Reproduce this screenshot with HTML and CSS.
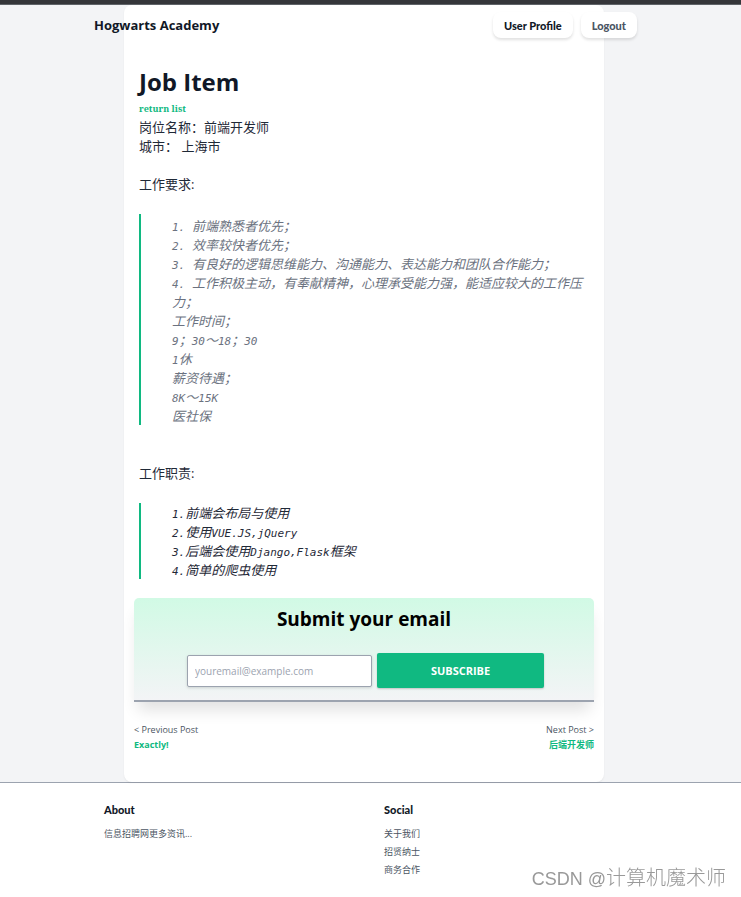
FILE: index.html
```
<!DOCTYPE html>
<html lang="zh-CN">
<head>
    <meta charset="UTF-8">
    <title>Hogwarts Academy</title>
    <link rel="stylesheet" href="styles.css">
</head>
<body>
    <div class="topbar"></div>
    <div class="page">
        <header class="nav">
            <a class="brand" href="#">Hogwarts Academy</a>
            <nav class="nav-links">
                <a class="pill" href="#">User Profile</a>
                <a class="pill muted" href="#">Logout</a>
            </nav>
        </header>
        <main class="card">
            <article class="job">
                <h1>Job Item</h1>
                <a class="return" href="#">return list</a>
                <div class="line">岗位名称：前端开发师</div>
                <div class="line">城市： 上海市</div>
                <h2>工作要求:</h2>
                <blockquote class="gray">
                    <p><code>1. </code>前端熟悉者优先；</p>
                    <p><code>2. </code>效率较快者优先；</p>
                    <p><code>3. </code>有良好的逻辑思维能力、沟通能力、表达能力和团队合作能力；</p>
                    <p><code>4. </code>工作积极主动，有奉献精神，心理承受能力强，能适应较大的工作压力；</p>
                    <p>工作时间；</p>
                    <p><code>9</code>；<code>30</code>～<code>18</code>；<code>30</code></p>
                    <p><code>1</code>休</p>
                    <p>薪资待遇；</p>
                    <p><code>8K</code>～<code>15K</code></p>
                    <p>医社保</p>
                </blockquote>
                <h2 class="duty">工作职责:</h2>
                <blockquote>
                    <p><code>1.</code>前端会布局与使用</p>
                    <p><code>2.</code>使用<code>VUE.JS,jQuery</code></p>
                    <p><code>3.</code>后端会使用<code>Django,Flask</code>框架</p>
                    <p><code>4.</code>简单的爬虫使用</p>
                </blockquote>
            </article>
            <form class="subscribe">
                <label for="email">Submit your email</label>
                <div class="fields">
                    <input type="email" id="email" name="email" placeholder="youremail@example.com">
                    <button type="submit">SUBSCRIBE</button>
                </div>
            </form>
            <div class="posts">
                <div>
                    <span>&lt; Previous Post</span>
                    <a href="#">Exactly!</a>
                </div>
                <div class="next">
                    <span>Next Post &gt;</span>
                    <a href="#">后端开发师</a>
                </div>
            </div>
        </main>
    </div>
    <footer class="footer">
        <div class="footer-inner">
            <section>
                <h3>About</h3>
                <p>信息招聘网更多资讯...</p>
            </section>
            <section>
                <h3>Social</h3>
                <ul>
                    <li><a href="#">关于我们</a></li>
                    <li><a href="#">招贤纳士</a></li>
                    <li><a href="#">商务合作</a></li>
                </ul>
            </section>
        </div>
    </footer>
    <div class="watermark"><span>CSDN @</span>计算机魔术师</div>
</body>
</html>
```
FILE: styles.css
```
* {
    box-sizing: border-box;
}

body {
    margin: 0;
    background: #fff;
    color: #1f2937;
    font-family: "Open Sans", "Noto Sans CJK SC", sans-serif;
    font-size: 13px;
    line-height: 19px;
}

h1, h2, h3, p, ul, blockquote {
    margin: 0;
    padding: 0;
}

a {
    color: inherit;
    text-decoration: none;
}

.topbar {
    height: 5px;
    background: #35363a;
    border-bottom: 1px solid #5f6368;
}

.page, .footer {
    padding-right: 13px;
}

.page {
    position: relative;
    background: #f3f4f6;
}

/* the nav floats over the top of the card */
.nav {
    position: absolute;
    top: 0;
    left: 0;
    right: 10px;
    display: flex;
    align-items: center;
    justify-content: space-between;
    max-width: 543px;
    margin: 7px auto 0;
}

.brand {
    color: #111827;
    font-size: 13px;
    font-weight: bold;
}

.nav-links {
    display: flex;
    gap: 8px;
}

.pill {
    padding: 4px 11px 3px;
    border-radius: 8px;
    background: #fff;
    box-shadow: 0 2px 3px rgba(0, 0, 0, 0.12);
    color: #111827;
    font-family: Lato, sans-serif;
    font-size: 11px;
    font-weight: 900;
}

.muted {
    color: #4b5563;
}

.card {
    max-width: 480px;
    margin: 0 auto;
    padding: 59px 10px 30px;
    border-radius: 8px;
    background: #fff;
    box-shadow: 0 1px 2px rgba(0, 0, 0, 0.06);
}

.job {
    padding: 0 5px;
}

h1 {
    color: #111827;
    font-size: 24px;
    line-height: 36px;
    font-weight: bold;
}

.return {
    display: block;
    color: #10b981;
    font-family: "Noto Serif", "DejaVu Serif", serif;
    font-size: 9px;
    line-height: 18px;
    font-weight: bold;
}

h2 {
    margin-top: 19px;
    font-size: 13px;
    font-weight: normal;
}

.duty {
    margin-top: 39px;
}

blockquote {
    margin: 20px 0 19px;
    padding-left: 31px;
    border-left: 2px solid #10b981;
    font-style: italic;
    font-family: "Noto Sans CJK SC", sans-serif;
}

.gray {
    color: #6b7280;
    padding-top: 2px;
}

code {
    font-family: "DejaVu Sans Mono", monospace;
    font-size: 11px;
    line-height: 1;
    white-space: pre-wrap;
}

.subscribe {
    padding: 5px 50px 12px;
    border-bottom: 2px solid #9ca3af;
    border-radius: 5px 5px 0 0;
    background: linear-gradient(#d1fae5, #f3f4f6);
    box-shadow: 0 12px 16px -4px rgba(0, 0, 0, 0.12);
    text-align: center;
}

.subscribe label {
    display: block;
    margin-bottom: 18px;
    color: #000;
    font-size: 19px;
    line-height: 32px;
    font-weight: bold;
}

.fields {
    display: flex;
    align-items: center;
    gap: 5px;
    padding: 0 0 0 3px;
}

.fields input {
    flex: 12;
    min-width: 0;
    height: 32px;
    padding: 0 7px;
    border: 1px solid #9ca3af;
    border-radius: 2px;
    box-shadow: 0 1px 3px rgba(0, 0, 0, 0.15);
    font-family: "Open Sans", sans-serif;
    font-size: 10px;
}

.fields input::placeholder {
    color: #9ca3af;
}

.fields button {
    flex: 11;
    height: 35px;
    border: none;
    border-radius: 2px;
    background: #10b981;
    box-shadow: 0 1px 2px rgba(0, 0, 0, 0.2);
    color: #fff;
    font-family: "Open Sans", sans-serif;
    font-size: 11px;
    font-weight: bold;
}

.posts {
    display: flex;
    justify-content: space-between;
    margin-top: 20px;
    color: #4b5563;
    font-size: 9px;
    line-height: 15px;
}

.posts span, .posts a {
    display: block;
}

.posts a {
    color: #10b981;
    font-weight: bold;
}

.next {
    text-align: right;
}

.footer {
    border-top: 1px solid #9ca3af;
}

.footer-inner {
    display: grid;
    grid-template-columns: 1fr 1fr;
    max-width: 560px;
    margin: 0 auto;
    padding: 18px 0;
}

.footer section {
    padding: 0 20px;
    color: #4b5563;
    font-size: 9px;
    line-height: 18px;
}

.footer h3 {
    margin-bottom: 6px;
    color: #111827;
    font-family: Lato, sans-serif;
    font-size: 11px;
    font-weight: 900;
}

.footer ul {
    list-style: none;
}

.watermark {
    position: fixed;
    right: 15px;
    bottom: 4px;
    color: #999;
    font-family: "Noto Sans CJK SC", sans-serif;
    font-size: 20px;
    font-weight: 300;
    line-height: 28px;
    text-shadow: -1px -1px 0 #fff;
}

.watermark span {
    font-family: "Liberation Sans", sans-serif;
    font-size: 18px;
}
```
